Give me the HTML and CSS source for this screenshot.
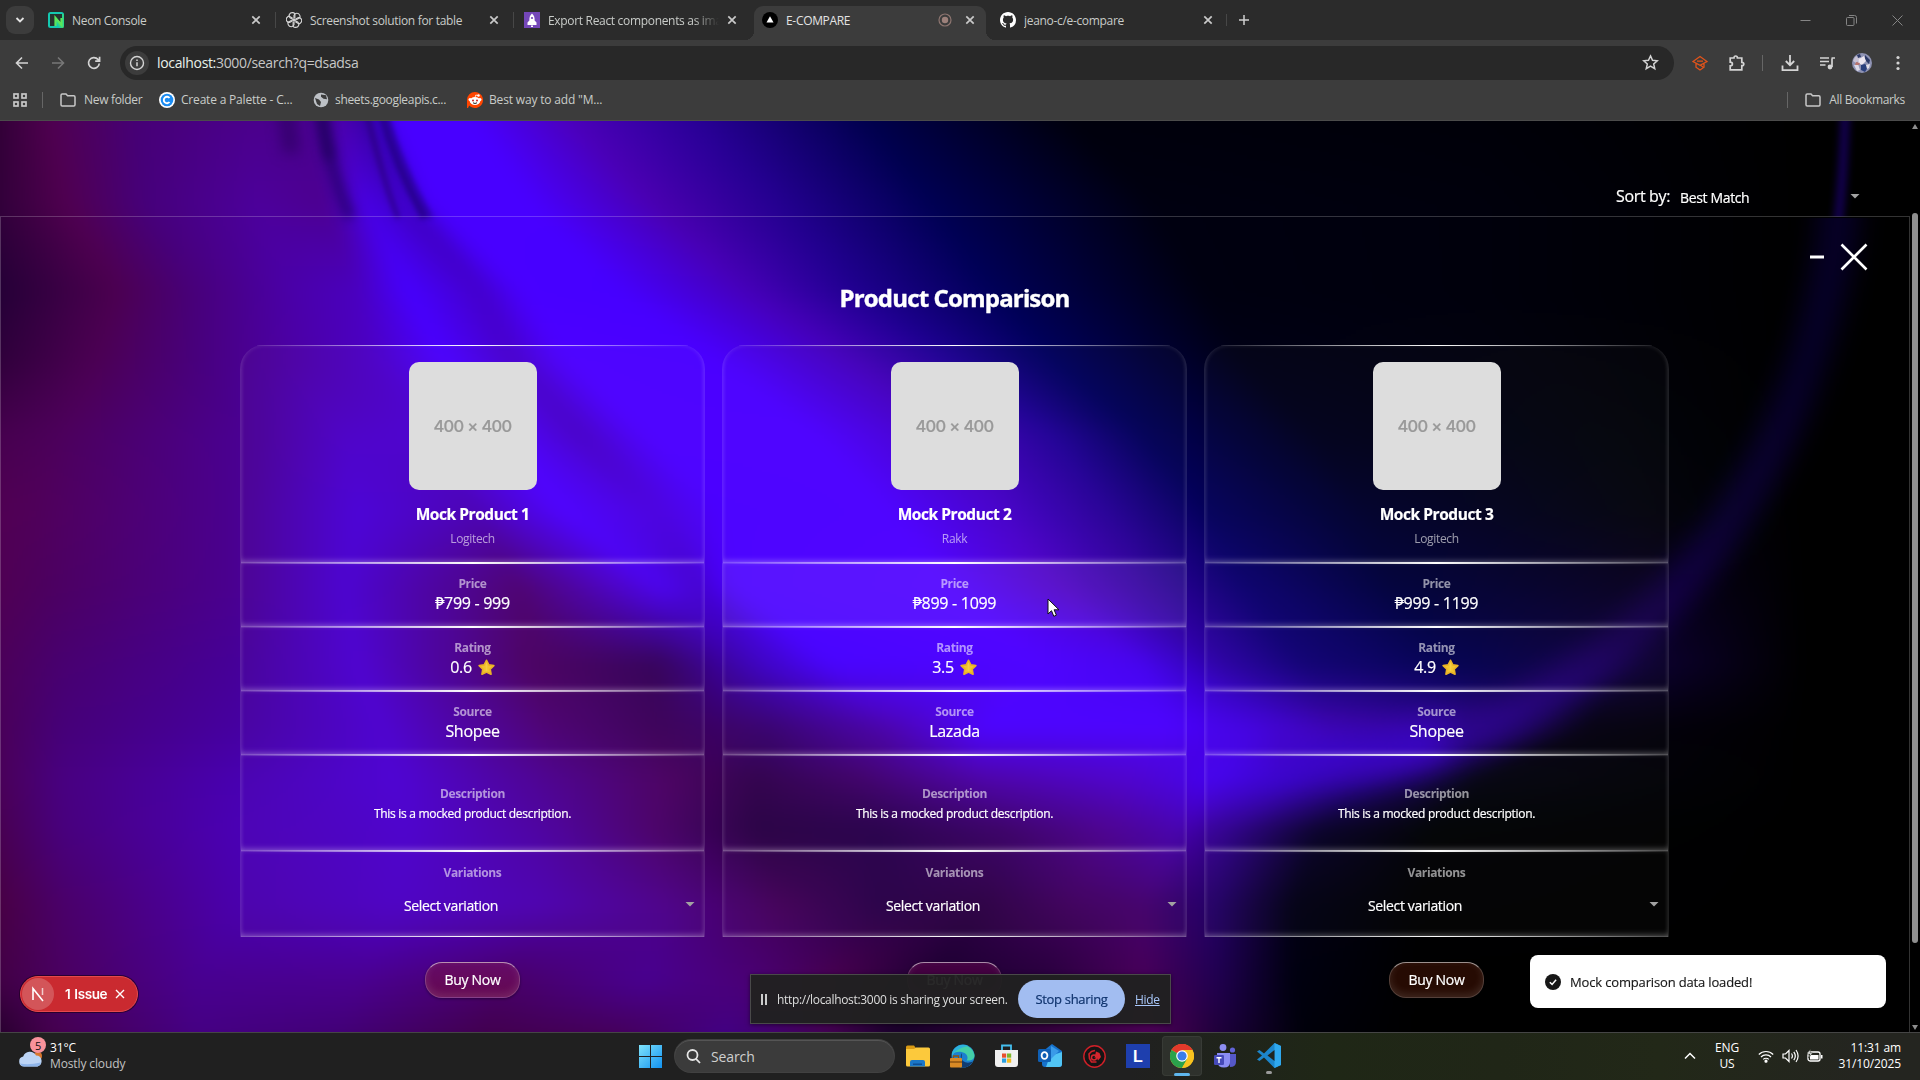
FILE: index.html
```html
<!DOCTYPE html>
<html lang="en">
<head>
<meta charset="utf-8">
<title>E-COMPARE</title>
<link rel="stylesheet" href="styles.css">
</head>
<body>
<svg class="defs" width="0" height="0" aria-hidden="true">
  <symbol id="x" viewBox="0 0 10 10"><path d="M1.3 1.3l7.4 7.4M8.7 1.3L1.3 8.7" fill="none" stroke="currentColor" stroke-width="1.7"/></symbol>
  <symbol id="folder" viewBox="0 0 16 14"><path d="M1 2.2Q1 1 2.2 1H6l1.6 1.8h6.2q1.2 0 1.2 1.2v7.8q0 1.2-1.2 1.2H2.200Q1 13 1 11.800z" fill="none" stroke="#c7c7c7" stroke-width="1.5"/></symbol>
  <symbol id="star" viewBox="0 0 20 20"><path d="M10 1.600l2.700 5.300 5.900.8-4.300 4.200 1 6L10 15.200 4.700 17.900l1-6L1.400 7.700l5.900-.8z" fill="#f2c62f" stroke="#eab326" stroke-width="2" stroke-linejoin="round"/><path d="M10 4v11" stroke="#f8d95a" stroke-width="2" opacity=".5"/></symbol>
</svg>
<div class="screen">
  <header class="chrome">
    <div class="tabstrip">
      <div class="tab-search"><svg width="10" height="8" viewBox="0 0 10 8"><path d="M1.500 2L5 5.500 8.500 2" fill="none" stroke="#e3e3e3" stroke-width="1.800"/></svg></div>
      <div class="tab">
        <svg class="fav" viewBox="0 0 16 16"><rect width="16" height="16" rx="2.500" fill="#14c8b0"/><path d="M16 2v13q0 1-1 1h-3L2 2z" fill="#3fe070" opacity=".55"/><path d="M2 2h12v10L8 5.500V14H2z" fill="#26322f"/><path d="M7.500 14V6l6 7V6" fill="none" stroke="#5be65b" stroke-width="2.200"/></svg>
        <span class="tab-title">Neon Console</span><svg class="tab-x"><use href="#x"/></svg>
      </div>
      <div class="tab sep">
        <svg class="fav" viewBox="0 0 16 16" fill="none" stroke="#d6d6d6" stroke-width="1.150"><g id="petals"><path d="M8 8V3.400a3 3 0 0 1 5.600-.4 3 3 0 0 1 .3 2.600L10.200 7.700"/></g><use href="#petals" transform="rotate(60 8 8)"/><use href="#petals" transform="rotate(120 8 8)"/><use href="#petals" transform="rotate(180 8 8)"/><use href="#petals" transform="rotate(240 8 8)"/><use href="#petals" transform="rotate(300 8 8)"/></svg>
        <span class="tab-title">Screenshot solution for table</span><svg class="tab-x"><use href="#x"/></svg>
      </div>
      <div class="tab sep">
        <svg class="fav" viewBox="0 0 16 16"><rect width="16" height="16" fill="#7447b8"/><path d="M8 1.500q3 2.500 2.600 7l1.900 2v2.500h-9v-2.500l1.900-2Q5 4 8 1.500z" fill="#fff"/><circle cx="8" cy="6" r="1.100" fill="#7447b8"/><path d="M7 13.500h2v1.500H7z" fill="#fff"/></svg>
        <span class="tab-title fade">Export React components as image</span><svg class="tab-x"><use href="#x"/></svg>
      </div>
      <div class="tab active">
        <svg class="fav" viewBox="0 0 16 16"><circle cx="8" cy="8" r="8" fill="#000"/><path d="M8 4.300l3.500 6.200h-7z" fill="#fff"/></svg>
        <span class="tab-title">E-COMPARE</span>
        <svg class="rec" viewBox="0 0 14 14"><circle cx="7" cy="7" r="6" fill="none" stroke="#8d7570" stroke-width="1.200"/><circle cx="7" cy="7" r="3.200" fill="#9d817b"/></svg>
        <svg class="tab-x"><use href="#x"/></svg>
      </div>
      <div class="tab last">
        <svg class="fav" viewBox="0 0 16 16"><path fill="#fff" d="M8 0C3.580 0 0 3.580 0 8c0 3.540 2.290 6.530 5.470 7.590.4.070.55-.17.55-.38 0-.19-.01-.82-.01-1.490-2.010.37-2.530-.49-2.690-.94-.09-.23-.48-.94-.82-1.130-.28-.15-.68-.52-.01-.53.63-.01 1.080.58 1.230.82.72 1.210 1.870.87 2.330.66.070-.52.28-.87.51-1.070-1.780-.2-3.640-.89-3.640-3.950 0-.87.31-1.590.82-2.150-.08-.2-.36-1.020.08-2.120 0 0 .67-.21 2.200.82.64-.18 1.320-.27 2-.27s1.360.09 2 .27c1.530-1.040 2.200-.82 2.200-.82.44 1.100.16 1.920.08 2.120.51.56.82 1.270.82 2.150 0 3.070-1.870 3.750-3.650 3.950.29.25.54.73.54 1.480 0 1.070-.01 1.930-.01 2.200 0 .21.15.46.55.38A8.010 8.010 0 0 0 16 8c0-4.420-3.580-8-8-8z"/></svg>
        <span class="tab-title">jeano-c/e-compare</span><svg class="tab-x"><use href="#x"/></svg>
      </div>
      <svg class="new-tab sep" viewBox="0 0 12 12"><path d="M6 1v10M1 6h10" stroke="#d0d0d0" stroke-width="1.500"/></svg>
      <div class="win-btns">
        <svg width="11" height="11" viewBox="0 0 11 11"><path d="M.5 5.500h10" stroke="#858585"/></svg>
        <svg width="11" height="11" viewBox="0 0 11 11" fill="none" stroke="#858585"><rect x=".5" y="2.500" width="7.500" height="8" rx="1"/><path d="M3 .5h5.500q2 0 2 2V8.500"/></svg>
        <svg width="11" height="11" viewBox="0 0 11 11"><path d="M.5.5l10 10M10.500.5l-10 10" stroke="#858585"/></svg>
      </div>
    </div>
    <div class="toolbar">
      <svg class="nav" viewBox="0 0 16 16" fill="none" stroke="#d4d4d4" stroke-width="1.600"><path d="M14 8H2.800M8 2.500L2.500 8 8 13.500"/></svg>
      <svg class="nav" viewBox="0 0 16 16" fill="none" stroke="#777" stroke-width="1.600"><path d="M2 8h11.200M8 2.500L13.500 8 8 13.500"/></svg>
      <svg class="nav" viewBox="0 0 16 16" fill="none" stroke="#d4d4d4" stroke-width="1.700"><path d="M13.300 8.500A5.400 5.400 0 1 1 12 4.400l1.500 1.600M13.600 1.800v4.400H9.200"/></svg>
      <div class="omnibox">
        <span class="info"><svg width="16" height="16" viewBox="0 0 16 16"><circle cx="8" cy="8" r="6.500" fill="none" stroke="#d4d4d4" stroke-width="1.400"/><path d="M8 7.200v4M8 4.500v1.500" stroke="#d4d4d4" stroke-width="1.500"/></svg></span>
        <span class="url"><b>localhost:</b>3000/search?q=dsadsa</span>
        <svg class="bookmark" viewBox="0 0 16 16"><path d="M8 1.800l1.900 4.100 4.500.5-3.400 3 1 4.400L8 11.500l-4 2.300 1-4.400-3.400-3 4.500-.5z" fill="none" stroke="#d4d4d4" stroke-width="1.400"/></svg>
      </div>
      <div class="tools">
        <svg class="t1" width="16" height="16" viewBox="0 0 16 16" fill="none" stroke="#e2541b" stroke-width="1.300"><path d="M1 6.500L8 1.500l7 5-7 3.700zM4 8.500v3.700L8 15l4-2.800V8.500M5 6.200h6M8 10l3 2"/></svg>
        <svg class="t2" width="18" height="18" viewBox="0 0 18 18" fill="none" stroke="#d4d4d4" stroke-width="1.700"><path d="M2.200 4h3.800c0-1.300.6-2 1.700-2s1.700.7 1.700 2h4.400v4.300c1.300 0 2 .6 2 1.700s-.7 1.700-2 1.700v4.100H2.200v-4c1.500 0 2.200-.7 2.200-1.800s-.7-1.800-2.200-1.800z"/></svg>
        <i class="vline"></i>
        <svg class="t3" width="18" height="18" viewBox="0 0 18 18" fill="none" stroke="#d4d4d4" stroke-width="1.800"><path d="M9 1v10M4.800 7L9 11.200 13.200 7M1.500 11.500v4.700h15v-4.700"/></svg>
        <svg class="t4" width="16" height="16" viewBox="0 0 16 16"><path d="M1 3h9M1 6.500h9M1 10h5.500M13 3.500V12M12.500 3H16" stroke="#d4d4d4" stroke-width="1.700"/><circle cx="11" cy="12" r="2.400" fill="#d4d4d4"/></svg>
        <svg class="t5" width="20" height="20" viewBox="0 0 20 20"><circle cx="10" cy="10" r="10" fill="#8f93b4"/><path d="M3 4l4-2 2 4-5 4-3-2z" fill="#c7c2d4"/><path d="M13 2l5 5-1 4-4-4zM5 2l3-1 1 3-3 1z" fill="#2b3866"/><path d="M7 6l5-3 2 5-4 4-4-2z" fill="#ece6f0"/><path d="M9 12l4-1 3 3-3 5-4-2z" fill="#2a3f7c"/><path d="M2 12l4-1 2 6-3 1z" fill="#dcdae8"/><path d="M4 9l4 1-1 2H3z" fill="#b8746e"/><path d="M14 12l4-1-1 4-2 1z" fill="#e3dfe8"/></svg>
        <svg width="4" height="16" viewBox="0 0 4 16" fill="#d4d4d4"><circle cx="2" cy="2.500" r="1.600"/><circle cx="2" cy="8" r="1.600"/><circle cx="2" cy="13.500" r="1.600"/></svg>
      </div>
    </div>
    <div class="bookmarks">
      <svg class="grid-ico" width="14" height="14" viewBox="0 0 14 14" fill="none" stroke="#c7c7c7" stroke-width="1.700"><rect x="1" y="1" width="4" height="4"/><rect x="9" y="1" width="4" height="4"/><rect x="1" y="9" width="4" height="4"/><rect x="9" y="9" width="4" height="4"/></svg>
      <i class="vline"></i>
      <span class="bm bm-1"><svg width="16" height="14"><use href="#folder"/></svg>New folder</span>
      <span class="bm bm-2"><svg width="16" height="16" viewBox="0 0 16 16"><circle cx="8" cy="8" r="8" fill="#fff"/><circle cx="8" cy="8" r="6.300" fill="#1b8cf2"/><path d="M10.500 6a3.200 3.200 0 1 0 0 4" fill="none" stroke="#fff" stroke-width="1.900"/></svg>Create a Palette - C...</span>
      <span class="bm bm-3"><svg width="16" height="16" viewBox="0 0 16 16"><circle cx="8" cy="8" r="7.300" fill="#bdc1c6"/><path d="M8 2.500l5 .8 1 4-3.500-.5-2.500-2zM2 6l4 1.500 2 2.500-1 4-3-2z" fill="#3c3c3c"/></svg>sheets.googleapis.c...</span>
      <span class="bm bm-4"><svg width="16" height="16" viewBox="0 0 16 16"><path d="M8 0a8 8 0 1 1-5.800 13.500L1 16H0V8a8 8 0 0 1 8-8z" fill="#ff4500"/><ellipse cx="8" cy="9" rx="5.300" ry="4" fill="#fff"/><circle cx="3" cy="7.500" r="1.500" fill="#fff"/><circle cx="13" cy="7.500" r="1.500" fill="#fff"/><circle cx="11.500" cy="3.500" r="1.200" fill="#fff"/><path d="M8 5.500l.8-2.500 2.200.5" stroke="#fff" fill="none" stroke-width=".8"/><circle cx="6" cy="8.500" r="1" fill="#c22"/><circle cx="10" cy="8.500" r="1" fill="#c22"/><path d="M6 10.800q2 1.400 4 0" stroke="#222" fill="none"/></svg>Best way to add "M...</span>
      <span class="bm all"><i class="vline"></i><svg width="16" height="14"><use href="#folder"/></svg>All Bookmarks</span>
    </div>
  </header>

  <main class="page">
    <canvas class="backdrop" id="backdrop" width="1568" height="745"></canvas>
    <div class="content">
      <div class="sortbar"><span class="sort-label">Sort by:</span><span class="sort-value">Best Match</span><i class="caret"></i></div>
      <section class="modal">
        <div class="modal-btns">
          <svg width="14" height="4" viewBox="0 0 14 4"><path d="M0 2h14" stroke="#fff" stroke-width="3"/></svg>
          <svg width="28" height="28" viewBox="0 0 28 28"><path d="M1.500 1.500l25 25M26.500 1.500l-25 25" stroke="#fff" stroke-width="2.600"/></svg>
        </div>
        <h1>Product Comparison</h1>
        <div class="cards">
          <article class="card">
            <div class="cell head"><div class="thumb">400 × 400</div><h2>Mock Product 1</h2><span class="brand">Logitech</span></div>
            <div class="cell"><label>Price</label><span class="val">₱799 - 999</span></div>
            <div class="cell"><label>Rating</label><span class="val rate">0.6 <svg><use href="#star"/></svg></span></div>
            <div class="cell"><label>Source</label><span class="val">Shopee</span></div>
            <div class="cell desc"><label>Description</label><p>This is a mocked product description.</p></div>
            <div class="cell vars"><label>Variations</label><div class="select"><span>Select variation</span><i class="caret"></i></div></div>
            <button class="buy">Buy Now</button>
          </article>
          <article class="card">
            <div class="cell head"><div class="thumb">400 × 400</div><h2>Mock Product 2</h2><span class="brand">Rakk</span></div>
            <div class="cell hover"><label>Price</label><span class="val">₱899 - 1099</span></div>
            <div class="cell"><label>Rating</label><span class="val rate">3.5 <svg><use href="#star"/></svg></span></div>
            <div class="cell"><label>Source</label><span class="val">Lazada</span></div>
            <div class="cell desc"><label>Description</label><p>This is a mocked product description.</p></div>
            <div class="cell vars"><label>Variations</label><div class="select"><span>Select variation</span><i class="caret"></i></div></div>
            <button class="buy plum">Buy Now</button>
          </article>
          <article class="card">
            <div class="cell head"><div class="thumb">400 × 400</div><h2>Mock Product 3</h2><span class="brand">Logitech</span></div>
            <div class="cell"><label>Price</label><span class="val">₱999 - 1199</span></div>
            <div class="cell"><label>Rating</label><span class="val rate">4.9 <svg><use href="#star"/></svg></span></div>
            <div class="cell"><label>Source</label><span class="val">Shopee</span></div>
            <div class="cell desc"><label>Description</label><p>This is a mocked product description.</p></div>
            <div class="cell vars"><label>Variations</label><div class="select"><span>Select variation</span><i class="caret"></i></div></div>
            <button class="buy brown">Buy Now</button>
          </article>
        </div>
      </section>
    </div>
    <div class="scrollbar"><i class="arrow up"></i><i class="thumb-bar"></i><i class="arrow down"></i></div>

    <div class="issue"><span class="n"><svg width="14" height="16" viewBox="0 0 14 16"><path d="M2 14V2.500L12 15" fill="none" stroke="#fff" stroke-width="1.600"/><path d="M11.500 2v7" stroke="#fff" stroke-width="1.500" opacity=".7"/></svg></span><b>1 Issue</b><svg width="10" height="10" viewBox="0 0 10 10"><path d="M1 1l8 8M9 1L1 9" stroke="#fff" stroke-width="1.400"/></svg></div>
    <div class="share">
      <i class="pause"></i><span class="share-text">http://localhost:3000 is sharing your screen.</span><span class="stop">Stop sharing</span><a class="hide">Hide</a>
    </div>
    <div class="toast"><svg width="16" height="16" viewBox="0 0 16 16"><circle cx="8" cy="8" r="8" fill="#171717"/><path d="M4.800 8.200l2.300 2.200 4-4.600" fill="none" stroke="#fff" stroke-width="1.500"/></svg>Mock comparison data loaded!</div>
    <svg class="cursor" width="13" height="20" viewBox="0 0 13 20"><path d="M1 1v15l3.500-3.300 2.300 5.600 2.600-1.100-2.300-5.400H12z" fill="#fff" stroke="#111"/></svg>
  </main>

  <footer class="taskbar">
    <div class="weather">
      <div class="cloud"><svg width="26" height="16" viewBox="0 0 26 16"><circle cx="20" cy="5" r="4" fill="#d8752c"/><path d="M6 15.500a5 5 0 0 1-.8-9.900A7 7 0 0 1 18 4.500a5.600 5.600 0 0 1 1.500 11z" fill="#bcd4f5"/><path d="M6 15.500a5 5 0 0 1-4-3q8 2 21-1a5 5 0 0 1-3.500 4z" fill="#8fb5ea"/></svg><span class="badge">5</span></div>
      <div class="wtext"><span>31°C</span><span class="dim">Mostly cloudy</span></div>
    </div>
    <div class="apps">
      <svg width="23" height="23" viewBox="0 0 23 23"><defs><linearGradient id="wg" x2="1" y2="1"><stop stop-color="#7fe3fb"/><stop offset="1" stop-color="#1292f0"/></linearGradient></defs><path d="M0 0h11v11H0zM12 0h11v11H12zM0 12h11v11H0zM12 12h11v11H12z" fill="url(#wg)"/></svg>
      <div class="search"><svg width="15" height="15" viewBox="0 0 15 15" fill="none" stroke="#e6e6e6" stroke-width="1.800"><circle cx="6.500" cy="6" r="5"/><path d="M10 9.800l4 4.200"/></svg>Search</div>
      <svg width="24" height="22" viewBox="0 0 24 22"><path d="M0 2q0-1.500 1.500-1.500H8L10.500 4H0z" fill="#d99a13"/><path d="M0 4h8l2-1.500h12.500Q24 2.500 24 4v16q0 1.500-1.500 1.500h-21Q0 21.500 0 20z" fill="#fcc93c"/><path d="M4 21.500V17q0-2 2-2h11q2 0 2 2v4.500z" fill="#1a77c8"/><path d="M7 18.500h9v1.500H7z" fill="#0d4f94"/></svg>
      <svg width="25" height="24" viewBox="0 0 25 24"><circle cx="13" cy="12" r="11.500" fill="#1b80cf"/><path d="M2 10A11.500 11.500 0 0 1 24.500 11c.3 4-3 6-8 5.500 2-2 1-6-2-7.500-5-2.500-10-1-12.500 1z" fill="#43cfa8"/><path d="M2 9A11.500 11.500 0 0 1 18 2C10 4 5 6 2 13z" fill="#2db2dc"/><path d="M12 9q-3 4 1 8 4 3 10 .5Q18 25 11 23z" fill="#113c70"/><rect y="14" width="12" height="9.500" rx="1" fill="#d98a25"/><path d="M3.500 14v-2h5v2M0 18h12" stroke="#8c5310" fill="none" stroke-width="1.300"/></svg>
      <svg width="23" height="24" viewBox="0 0 23 24"><path d="M7 6V1.500h9V6" fill="none" stroke="#45bff0" stroke-width="1.800"/><path d="M0 6h23v14q0 3-3 3H3q-3 0-3-3z" fill="#f0f0f0"/><path d="M7 9.500h4.200v4.200H7z" fill="#e8502e"/><path d="M12 9.500h4.200v4.200H12z" fill="#7db72c"/><path d="M7 14.500h4.200v4.200H7z" fill="#2a9fe0"/><path d="M12 14.500h4.200v4.200H12z" fill="#f5ba20"/></svg>
      <svg width="25" height="24" viewBox="0 0 25 24"><path d="M4 8L14 0l10 7v13q0 3-3 3H7q-3 0-3-3z" fill="#1672cc"/><path d="M12 12l12-4v12q0 3-3 3H8z" fill="#51c5f5"/><path d="M13 2l8 5-8 8z" fill="#3a9be8"/><rect y="5" width="13" height="13" rx="1.500" fill="#0f5fb4"/><ellipse cx="6.500" cy="11.500" rx="2.900" ry="3.400" fill="none" stroke="#fff" stroke-width="1.800"/></svg>
      <svg width="23" height="23" viewBox="0 0 23 23"><circle cx="11.500" cy="11.500" r="10.700" fill="#151515" stroke="#cf2028" stroke-width="1.400"/><path d="M12 5.500L8.500 6.500 6 9l.5 4.500 2 3.500h5" fill="none" stroke="#cf2028" stroke-width="1.600"/><path d="M13 6.500l3.500 1.500 1.500 4-3 3.500-1.500-3.500-2 1z" fill="#d6262e"/><circle cx="11" cy="12.500" r="2.500" fill="none" stroke="#d6262e" stroke-width="1.400"/></svg>
      <svg width="24" height="24" viewBox="0 0 24 24"><rect width="24" height="24" fill="#1e3fae"/><text x="7" y="18" class="l-glyph">L</text></svg>
      <div class="app-active"><svg width="24" height="24" viewBox="0 0 24 24"><circle cx="12" cy="12" r="12" fill="#f9c31f"/><path d="M12 12L1.600 6A12 12 0 0 1 22.400 6z" fill="#e3392b"/><path d="M1.600 6A12 12 0 0 0 12 24l5.200-9z" fill="#2ba24c"/><path d="M12 6h10.400a12 12 0 0 1 0 12A12 12 0 0 1 12 24l5.200-9z" fill="#f9c31f"/><path d="M1.600 6A12 12 0 0 1 22.400 6H12z" fill="#e3392b"/><circle cx="12" cy="12" r="5.800" fill="#fff"/><circle cx="12" cy="12" r="4.600" fill="#3b7de8"/></svg></div>
      <svg width="23" height="24" viewBox="0 0 23 24"><circle cx="9" cy="3.500" r="3.400" fill="#8d8df0"/><circle cx="18.500" cy="6" r="2.600" fill="#6264d8"/><path d="M14 10h8v8q0 5-6 5z" fill="#5558c8"/><path d="M3 9h13v9q0 5.500-6 5.500T3 18z" fill="#8a8cf3"/><rect y="11" width="10" height="10" rx="1.200" fill="#4549b8"/><path d="M2.500 13.800h5M5 13.800V19" stroke="#fff" stroke-width="1.400"/></svg>
      <div class="vs"><svg width="24" height="25" viewBox="0 0 24 25"><path d="M17.500 0L24 3v19l-6.500 3L7 14.500 2.500 18 0 16.500 5 12.500 0 8.500 2.500 7 7 10.500z" fill="#1c86cc"/><path d="M17.500 0L24 3v19l-6.500 3z" fill="#2fa8ee"/><path d="M17.500 7v11l-7-5.500z" fill="#20241f"/></svg></div>
    </div>
    <div class="tray">
      <svg class="chev" width="12" height="8" viewBox="0 0 12 8"><path d="M1 6.500l5-5 5 5" fill="none" stroke="#fff" stroke-width="1.500"/></svg>
      <div class="lang"><span>ENG</span><span>US</span></div>
      <svg class="wifi" width="16" height="14" viewBox="0 0 16 14" fill="none" stroke="#fff" stroke-width="1.200"><path d="M.8 5.500a10.200 10.200 0 0 1 14.400 0M3 8a7 7 0 0 1 10 0M5.200 10.400a4 4 0 0 1 5.600 0"/><circle cx="8" cy="12.200" r="1" fill="#fff"/></svg>
      <svg class="vol" width="17" height="14" viewBox="0 0 17 14" fill="none" stroke="#fff" stroke-width="1.200"><path d="M1 5h2.500L7 1.500v11L3.500 9H1zM9.500 4.500q1.800 2.500 0 5M11.800 2.800q3 4.200 0 8.400M14 1q4.200 6 0 12"/></svg>
      <svg class="bat" width="17" height="14" viewBox="0 0 17 14"><rect x="2" y="3" width="12" height="9" rx="2" fill="none" stroke="#fff" stroke-width="1.300"/><path d="M4 6h8.500v4.500H4z" fill="#fff"/><path d="M15 6h1.500v3.500H15z" fill="#fff"/><path d="M4.500 0L1 5h3L2.500 9 6.500 4H4z" fill="#fff" stroke="#20261a" stroke-width=".5"/></svg>
      <div class="clock"><span>11:31 am</span><span>31/10/2025</span></div>
    </div>
  </footer>
</div>
<script src="backdrop.js"></script>
</body>
</html>
```
FILE: styles.css
```css
* { box-sizing: border-box; }
body { margin: 0; font-family: "Open Sans", "Noto Sans", sans-serif; letter-spacing: -0.02em; color: #fff; background: #000; }
svg { display: block; flex: none; }
.defs { position: absolute; }
i { font-style: normal; }
.screen { width: 1920px; height: 1080px; overflow: hidden; display: flex; flex-direction: column; }

/* browser window */
.chrome { height: 121px; background: #3c3c3c; border-bottom: 1px solid #4b4b4b; font-size: 12px; color: #c9ccc9; flex: none; }
.tabstrip { height: 40px; background: #2b2b2b; display: flex; align-items: flex-start; padding-left: 6px; }
.tab-search { width: 28px; height: 28px; margin: 6px 2px 0 0; background: #3c3c3c; border-radius: 9px; display: grid; place-items: center; }
.tab { width: 238px; height: 28px; margin-top: 6px; padding: 0 13px 0 12px; display: flex; align-items: center; gap: 8px; position: relative; }
.tab-title { flex: 1; white-space: nowrap; overflow: hidden; }
.fade { -webkit-mask-image: linear-gradient(90deg, #000 85%, transparent); mask-image: linear-gradient(90deg, #000 85%, transparent); }
.fav { width: 16px; height: 16px; }
.tab-x { width: 10px; height: 10px; color: #c9c9c9; }
.rec { width: 14px; height: 14px; margin-right: 5px; }
.sep { background: linear-gradient(#474747, #474747) 1px 50% / 1px 16px no-repeat; }
.tab.active { background: #3c3c3c; height: 34px; width: 232px; margin-left: 4px; padding: 0 11px 6px 8px; border-radius: 9px 9px 0 0; color: #e3e3e3; }
.tab.active::before, .tab.active::after { content: ""; position: absolute; bottom: 0; width: 9px; height: 9px; }
.tab.active::before { left: -9px; background: radial-gradient(circle at 0 0, transparent 9px, #3c3c3c 9px); }
.tab.active::after { right: -9px; background: radial-gradient(circle at 100% 0, transparent 9px, #3c3c3c 9px); }
.tab.last { margin-left: 2px; }
.new-tab { width: 36px; height: 12px; margin: 14px 0 0 -1px; padding-left: 2px; background-size: 1px 12px; }
.win-btns { margin: 15px 17px 0 auto; display: flex; gap: 35px; }
.toolbar { height: 45px; display: flex; align-items: center; padding: 1px 20px 0 14px; }
.nav { width: 16px; height: 16px; margin-right: 20px; }
.omnibox { width: 1554px; height: 34px; margin-left: -2px; border-radius: 17px; background: #282828; display: flex; align-items: center; padding: 0 15px 1px 5px; flex: none; }
.info { width: 24px; height: 24px; border-radius: 50%; background: #3c3c3c; display: grid; place-items: center; margin-right: 8px; }
.url { flex: 1; font-size: 14px; color: #c7c7c7; letter-spacing: -0.024em; }
.url b { font-weight: 400; color: #e9f2ea; }
.bookmark { width: 17px; height: 17px; }
.tools { flex: 1; display: flex; align-items: center; padding-left: 18px; }
.t1 { margin-right: 20px; } .t2 { margin-right: 16px; } .t3 { margin: 0 20px 0 18px; } .t4 { margin-right: 17px; } .t5 { margin-right: 24px; }
.vline { width: 1px; height: 16px; background: #666; display: block; }
.bookmarks { height: 34px; display: flex; align-items: center; padding: 0 15px 3px 13px; margin-top: -1px; }
.bookmarks > .vline { margin: 0 17px 0 15px; }
.bm { display: flex; align-items: center; gap: 8px; white-space: nowrap; }
.bm-1 { width: 99px; } .bm-2, .bm-3 { gap: 6px; width: 154px; } .bm-4 { gap: 6px; }
.bm-2 { letter-spacing: -0.018em; } .bm-4 { letter-spacing: -0.014em; }
.bm-2 { letter-spacing: -0.016em; }
.all { margin-left: auto; }
.all .vline { margin-right: 9px; }

/* web page */
.page { position: relative; height: 911px; overflow: hidden; display: flex; flex: none; }
.backdrop { position: absolute; left: 0; top: -1px; width: 1920px; height: 912px; }
.content { position: relative; width: 1910px; -webkit-text-stroke: .2px currentColor; }
.sortbar { height: 95px; display: flex; align-items: center; padding: 55px 50px 0 1616px; line-height: 40px; }
.sort-label { font-size: 16px; width: 64px; letter-spacing: -0.022em; }
.sort-value { font-size: 14px; flex: 1; padding-top: 3px; letter-spacing: -0.025em; }
.caret { width: 10px; height: 5px; background: #a2a2a2; clip-path: polygon(0 0, 100% 0, 50% 100%); display: block; }
.modal { height: 850px; border: 1px solid rgba(255,255,255,.2); padding: 26px 1px 0 0; }
.modal-btns { display: flex; justify-content: flex-end; align-items: center; gap: 16px; padding-right: 40px; height: 28px; }
h1 { margin: 11px 0 31px; font-size: 24px; line-height: 32px; font-weight: 700; text-align: center; letter-spacing: -0.035em; -webkit-text-stroke: .4px #fff; }
.cards { display: grid; grid-template-columns: repeat(3, 465px); gap: 17px; width: 1429px; margin: 0 auto; }
.card { display: flex; flex-direction: column; align-items: center; }
.cell { position: relative; width: 465px; height: 64px; display: flex; flex-direction: column; align-items: center; padding-top: 13px; border: 1px solid rgba(255,255,255,.1); border-width: 0 1px; background: rgba(255,255,255,.018); box-shadow: inset 0 -5px 6px -3px rgba(255,255,255,.28), inset 0 0 5px rgba(255,255,255,.13); }
.cell::before, .cell::after { content: ""; position: absolute; left: 0; right: 0; height: 1px; background: linear-gradient(90deg, rgba(255,255,255,.08), #fff 50%, rgba(255,255,255,.08)); }
.cell::before { top: 0; } .cell::after { bottom: 0; }
.cell.hover { background: rgba(255,255,255,.08); }
.head { height: 218px; padding-top: 17px; border-radius: 24px 24px 0 0; }
.head::before { left: 16px; right: 16px; }
.thumb { width: 128px; height: 128px; border-radius: 10px; background: #ddd; color: #999; font: 500 16.500px Inter, sans-serif; letter-spacing: -0.04em; display: grid; place-items: center; }
h2 { margin: 12px 0 0; font-size: 15.500px; line-height: 24px; font-weight: 700; letter-spacing: -0.028em; }
.brand { font-size: 12px; line-height: 16px; margin-top: 5px; color: rgba(255,255,255,.6); -webkit-text-stroke: 0; }
label { font-size: 12px; line-height: 16px; font-weight: 700; color: rgba(255,255,255,.57); letter-spacing: -0.03em; -webkit-text-stroke: 0; }
.val { font-size: 16px; line-height: 24px; margin-top: -1px; letter-spacing: -0.018em; display: flex; align-items: center; }
.rate svg { width: 17px; height: 17px; margin-left: 6px; }
.desc { height: 96px; padding-top: 31px; }
.desc p { margin: 4px 0 0; font-size: 12px; line-height: 16px; font-weight: 500; letter-spacing: -0.025em; }
.vars { height: 86px; padding-top: 14px; }
.select { width: 100%; display: flex; justify-content: space-between; align-items: center; padding: 11px 9px 0 163px; font-size: 14px; line-height: 28px; letter-spacing: -0.025em; }
.select .caret { margin-top: -4px; }
.buy { margin-top: 25px; width: 95px; height: 36px; padding: 0 0 2px; border: 1px solid rgba(255,255,255,.22); border-top-color: rgba(255,255,255,.55); border-radius: 17px; font: 14px "Open Sans", sans-serif; letter-spacing: -0.02em; color: #fff; background: linear-gradient(#640a68, #640850); box-shadow: inset 0 -3px 8px rgba(255,255,255,.12), 0 1px 3px rgba(0,0,0,.4); }
.buy.plum { background: #430041; }
.buy.brown { background: #260b03; }
.scrollbar { position: relative; flex: 1; display: flex; flex-direction: column; align-items: center; padding: 3px 0 2px; }
.arrow { width: 6px; height: 5px; background: #8d8d8d; }
.up { clip-path: polygon(50% 0, 100% 100%, 0 100%); }
.down { clip-path: polygon(0 0, 100% 0, 50% 100%); margin-top: auto; }
.thumb-bar { width: 6px; height: 730px; margin-top: 84px; border-radius: 3px; background: #8f8f8f; }

/* floating layers */
.issue { position: absolute; left: 20px; top: 855px; width: 118px; height: 36px; border-radius: 18px; background: #ca2a30; border: 1px solid #e5484d; box-shadow: 0 0 0 1px rgba(20,0,20,.6); display: flex; align-items: center; padding: 0 12px 0 1px; font: 13.500px Inter, sans-serif; letter-spacing: -0.03em; word-spacing: 1px; }
.issue b { flex: 1; font-weight: 600; padding-left: 11px; }
.n { width: 32px; height: 32px; border-radius: 50%; background: #d35559; display: grid; place-items: center; }
.share { position: absolute; left: 750px; top: 853px; width: 421px; height: 50px; background: rgba(32,32,32,.96); border: 1px solid #494949; display: flex; align-items: center; font-size: 12px; color: #dedede; box-shadow: 0 1px 4px rgba(0,0,0,.5); }
.pause { width: 6px; height: 11px; border: solid #ccc; border-width: 0 2px; margin: 0 10px 0 10px; }
.share-text { width: 241px; white-space: nowrap; letter-spacing: -0.026em; }
.stop { width: 107px; height: 38px; border-radius: 19px; background: #a2bdf1; color: #10346e; display: grid; place-items: center; font-size: 13px; font-weight: 500; -webkit-text-stroke: .2px #10346e; }
.hide { margin-left: 10px; color: #a8c7fa; text-decoration: underline; }
.toast { position: absolute; left: 1530px; top: 834px; width: 356px; height: 53px; border-radius: 8px; background: #fff; color: #171717; display: flex; align-items: center; gap: 9px; padding-left: 15px; font-size: 13px; font-weight: 500; letter-spacing: -0.012em; -webkit-text-stroke: .15px #171717; }
.cursor { position: absolute; left: 1047px; top: 477px; }

/* taskbar */
.taskbar { height: 48px; display: flex; align-items: center; padding-bottom: 1px; border-top: 1px solid #454545; background: linear-gradient(90deg, #202020 1130px, #1f2716 1330px, #202617 1500px, #222818 1660px, #242520 1860px); font-size: 12px; letter-spacing: -0.01em; }
.weather { width: 638px; display: flex; align-items: center; padding-left: 18px; letter-spacing: -0.01em; }
.cloud { position: relative; width: 32px; padding-top: 6px; }
.badge { position: absolute; left: 12px; top: -8px; width: 16px; height: 16px; border-radius: 50%; background: #f8929b; color: #111; display: grid; place-items: center; font-size: 11px; }
.wtext, .lang, .clock { display: flex; flex-direction: column; line-height: 16px; }
.dim { color: #c2c2c2; }
.apps { display: flex; align-items: center; gap: 20px; width: 646px; padding-left: 1px; flex: none; }
.apps .search { width: 219px; height: 32px; margin: 0 -8px 0 -7px; border-radius: 16px; background: #3b3b3b; border-top: 1px solid #555; display: flex; align-items: center; gap: 10px; padding-left: 11px; font-size: 14px; color: #cfcfcf; flex: none; }
.search { box-shadow: 0 0 0 1px #414141; }
.l-glyph { font: 700 16px "Liberation Sans", sans-serif; fill: #fff; letter-spacing: 0; }
.app-active { width: 40px; height: 40px; margin: 0 -8px; border-radius: 4px; background: #2e312c; box-shadow: inset 0 0 0 1px #383b36; display: flex; flex-direction: column; align-items: center; padding-top: 8px; }
.app-active::after { content: ""; width: 16px; height: 3px; border-radius: 2px; background: #5fb7ee; margin-top: 5px; }
.vs { display: flex; flex-direction: column; align-items: center; height: 34px; padding-top: 4px; }
.vs::after { content: ""; width: 6px; height: 3px; flex: none; border-radius: 2px; background: #9a9a9a; margin-top: 3px; }
.tray { flex: 1; display: flex; align-items: center; justify-content: flex-end; padding-right: 19px; }
.lang { text-align: center; width: 26px; margin: 0 18px 0 18px; align-items: center; }
.wifi { margin: 0 8px 0 0; }
.vol { margin-right: 7px; }
.clock { width: 76px; align-items: flex-end; margin-left: 2px; }
```
FILE: backdrop.js
```js
// Colour mesh for the page backdrop. Every row lists the same ribbons as
// [x, colour] pairs; positions and colours are interpolated between rows.
const rows = [
  [98, "0 2a0030|50 500050|120 460074|205 4a0088|258 4a0090|285 4c00a8|308 3000a0|320 4800ff|385 4800ff|460 4c00bc|560 2a0098|700 00004c|860 00000c|1200 000008"],
  [177, "0 2c0036|65 500050|130 46007c|220 4c009c|275 4c0090|305 4800e8|342 3e00c0|356 4800ff|440 4800ff|540 4a00b0|640 240090|760 000054|940 000010|1200 00000c"],
  [245, "0 200034|105 4c0050|165 480078|245 4a00a8|300 4a00c0|340 4600ff|398 4400cc|430 4800ff|510 4600ff|615 4600b8|700 200090|810 000058|980 000010|1200 00000c"],
  [300, "0 2c0038|90 4c0054|175 480080|245 4c00a4|310 4c00c4|370 4a00ff|425 4800cc|465 4c00ff|590 4a00ff|700 4400b8|780 1c0090|860 00005c|1010 000016|1250 02020c"],
  [360, "0 46004c|60 4c005c|210 4a0094|290 4c00c8|355 4c00d0|420 4c00ff|480 4800c8|530 4c00ff|670 4c00ff|780 4600c0|860 200096|930 020058|1070 00001c|1300 02040c"],
  [420, "0 500050|40 50005a|200 4a0090|300 4a00d8|395 4a00b4|465 4c00ff|540 4a00e0|590 4a00ff|730 4c00ff|820 4600c8|900 280098|980 04005c|1110 00002c|1330 04040e"],
  [480, "0 500050|50 4c0060|200 4a0090|290 4a00d0|430 4c0070|545 4a00f0|575 4400d0|600 4a00ff|780 5000ff|860 5000c8|930 3400a0|1010 0c0070|1130 00003c|1330 080020"],
  [540, "0 4c0054|60 480070|200 460098|300 4c00d0|440 4a0060|540 340058|620 3c00c0|680 4600ff|850 4c00ff|930 4400f0|990 2c00a8|1060 100074|1180 020050|1300 100040"],
  [590, "0 4a0052|60 460078|200 4600a0|320 4c00d0|450 4c0074|540 3c0058|630 380070|730 4a00b0|800 4a00ff|950 4a00ff|1020 4200e0|1080 3c00b0|1170 2c0090|1290 040010"],
  [630, "0 4a0050|60 480080|200 4800b0|330 4c00d4|450 4c0090|550 4a0060|620 30004c|700 400068|800 4c00a8|920 4c00d0|985 4400f0|1050 3800c8|1120 200078|1200 040410"],
  [670, "0 480048|60 48007c|200 4a00b4|340 4c00cc|450 4c00a0|540 4a0068|620 280044|720 28004c|820 3c0068|900 4c0090|960 4600b0|1000 2e0088|1070 080028|1160 000204"],
  [730, "0 48003c|60 4a0068|200 4a00ac|330 4c00c4|450 4c00b0|550 4c0088|640 440058|720 280048|800 2c0044|870 40005c|930 44006c|985 240068|1050 020014|1150 000002"],
  [790, "0 400040|60 4a0060|170 480090|300 4a0090|420 480068|530 480090|610 4a0078|680 4a0050|760 1c0030|850 28003c|930 480058|990 200050|1050 000010|1150 000000"],
  [843, "0 180020|50 440048|170 440080|280 400070|400 400048|500 44004c|590 400088|680 400050|720 180028|850 38003c|940 4c0054|1000 180030|1060 000008|1150 000000"]
].map(([y, text]) => ({
  y,
  stops: (text + "|1460 000000").split("|").map(s => {
    const [x, hex] = s.split(" ");
    const n = parseInt(hex, 16);
    return [+x, n >> 16, (n >> 8) & 255, n & 255];
  })
}));

const W = 784, H = 373, TOP = 98;
const mesh = document.createElement("canvas");
mesh.width = W;
mesh.height = H;
const mctx = mesh.getContext("2d");
const image = mctx.createImageData(W, H);

for (let j = 0; j < H; j++) {
  const y = TOP + j * 2;
  let r = 0;
  while (r < rows.length - 2 && rows[r + 1].y < y) r++;
  const a = rows[r], b = rows[r + 1];
  const t = Math.min(1, Math.max(0, (y - a.y) / (b.y - a.y)));
  const stops = a.stops.map((s, i) => s.map((v, k) => v + (b.stops[i][k] - v) * t));
  let s = 0;
  for (let i = 0; i < W; i++) {
    const x = i * 2;
    while (s < stops.length - 2 && stops[s + 1][0] < x) s++;
    const p = stops[s], q = stops[s + 1];
    const u = Math.min(1, Math.max(0, (x - p[0]) / (q[0] - p[0])));
    const o = (j * W + i) * 4;
    for (let k = 0; k < 3; k++) image.data[o + k] = p[k + 1] + (q[k + 1] - p[k + 1]) * u;
    image.data[o + 3] = 255;
  }
}
mctx.putImageData(image, 0, 0);

const ctx = document.getElementById("backdrop").getContext("2d");
ctx.filter = "blur(7px)";
ctx.drawImage(mesh, -14, -14, 1596, 773);
ctx.translate(0, -TOP);

function ribbon(path, color, width, blur) {
  ctx.filter = `blur(${blur}px)`;
  ctx.strokeStyle = color;
  ctx.lineWidth = width;
  ctx.stroke(new Path2D(path));
}

// outer arc on the right, brightening towards the bottom of its sweep
function fade(stops) {
  const g = ctx.createLinearGradient(0, TOP, 0, 640);
  for (const [y, color] of stops) g.addColorStop((y - TOP) / (640 - TOP), color);
  return g;
}
const sweep = "M1508 60C1506 130 1504 160 1499 200C1482 300 1445 380 1402 440C1350 510 1290 560 1215 590C1140 618 1060 615 1000 595";
ctx.globalCompositeOperation = "lighten";
ctx.save();
ctx.beginPath();
ctx.rect(1400, TOP, 168, 79);
ctx.clip();
ribbon(sweep, "#150058", 7, 3);
ctx.restore();
ctx.save();
ctx.beginPath();
ctx.rect(0, 178, 1568, 700);
ctx.clip();
ribbon(sweep, fade([[98, "#07002a"], [300, "#060028"], [430, "#0c0034"], [520, "#180050"], [590, "#280088"], [640, "#3000a0"]]), 32, 11);
ribbon("M1180 602C1120 624 1050 622 990 604", "#3a00cc", 28, 13);
ctx.restore();
ctx.globalCompositeOperation = "source-over";

// pleats at the top left
ribbon("M232 80L238 125", "rgba(32,0,80,.55)", 12, 6);
ribbon("M262 90C266 120 274 150 286 178", "rgba(28,0,90,.6)", 9, 4);
ribbon("M262 90L269 130", "rgba(24,0,80,.5)", 9, 4);
ribbon("M299 90C306 120 314 150 325 178", "rgba(36,0,110,.6)", 4, 2);
ribbon("M311 90C320 125 334 155 347 178", "rgba(36,0,130,.8)", 7, 2);
ribbon("M314 90C322 120 338 155 352 178", "rgba(40,0,150,.5)", 5, 2);
```
